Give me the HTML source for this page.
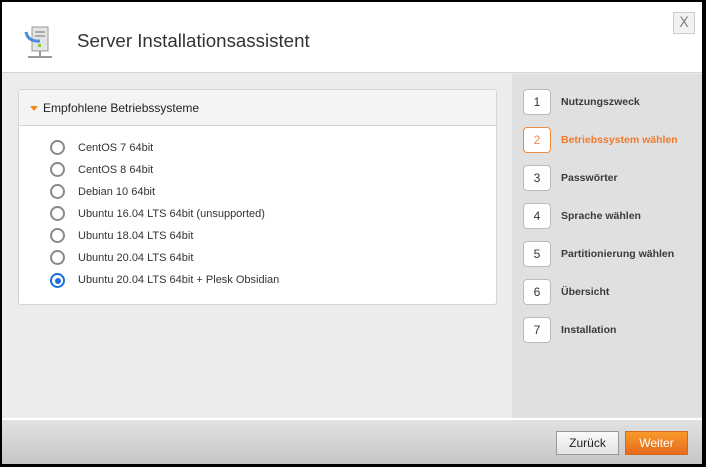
<!DOCTYPE html>
<html><head><style>
*{margin:0;padding:0;box-sizing:border-box}
body{width:706px;height:467px;background:#000;font-family:"Liberation Sans","DejaVu Sans",sans-serif;position:relative;overflow:hidden}
#w{position:absolute;left:2px;top:2px;width:700px;height:462px;background:#ececec}
#hd{position:absolute;left:0;top:0;width:700px;height:71px;background:#fff;border-bottom:1px solid #d4d4d4}
#hd h1{position:absolute;left:75px;top:28px;font-size:18.7px;font-weight:normal;color:#333}
#x{position:absolute;left:671px;top:10px;width:22px;height:22px;border:1px solid #ccc;background:#f2f2f2;color:#888;font-size:14px;text-align:center;line-height:20px;font-family:"DejaVu Sans",sans-serif}
#sb{position:absolute;left:510px;top:72px;width:190px;height:344px;background:#e0e0e0}
.st{position:absolute;left:11px;width:28px;height:26px;border:1px solid #bbb;border-radius:4px;background:#fff;font-size:12px;text-align:center;line-height:24px;color:#333}
.sl{position:absolute;left:49px;font-size:10.5px;font-weight:bold;color:#3a3a3a;line-height:26px}
#ft{position:absolute;left:0;top:416px;width:700px;height:46px;background:linear-gradient(#e2e2e2,#c6c6c6);border-top:2px solid #fff}
.b{position:absolute;top:11px;height:24px;font-size:12px;text-align:center;line-height:22px}
#pn{position:absolute;left:16px;top:87px;width:479px;height:216px;background:#fff;border:1px solid #d4d4d4;border-radius:3px}
#ph{height:36px;background:#f4f4f4;border-bottom:1px solid #d4d4d4;font-size:12px;line-height:36px;padding-left:24px;color:#222;position:relative}
#ph:before{content:"";position:absolute;left:11px;top:16px;border-left:4px solid transparent;border-right:4px solid transparent;border-top:5px solid #f08a1c}
.r{position:absolute;left:31px;width:15px;height:15px;border:2px solid #8a8a8a;border-radius:50%}
.r.on{border-color:#1a6fe0}
.r.on:after{content:"";position:absolute;left:2.5px;top:2.5px;width:6px;height:6px;border-radius:50%;background:#1a6fe0}
.rl{position:absolute;left:59px;font-size:11px;color:#333;line-height:16px}
</style></head><body>
<div id="w">
<div id="hd">
<svg style="position:absolute;left:22px;top:22px" width="32" height="40" viewBox="0 0 32 40">
<rect x="8" y="3" width="16" height="24" fill="#e4e4e4" stroke="#999"/>
<rect x="11" y="7" width="10" height="2" fill="#aaa"/><rect x="11" y="11" width="10" height="2" fill="#aaa"/>
<rect x="14" y="20" width="3" height="3" fill="#8c3"/>
<path d="M2 8 Q4 18 16 17" stroke="#4a8be0" stroke-width="3" fill="none"/>
<path d="M16 27 V33 M4 33 H28" stroke="#999" stroke-width="2"/>
</svg>
<h1>Server Installationsassistent</h1>
<div id="x">X</div>
</div>
<div id="pn">
<div id="ph">Empfohlene Betriebssysteme</div>
<div class="r" style="top:50px"></div><div class="rl" style="top:50px">CentOS 7 64bit</div>
<div class="r" style="top:72px"></div><div class="rl" style="top:72px">CentOS 8 64bit</div>
<div class="r" style="top:94px"></div><div class="rl" style="top:94px">Debian 10 64bit</div>
<div class="r" style="top:116px"></div><div class="rl" style="top:116px">Ubuntu 16.04 LTS 64bit (unsupported)</div>
<div class="r" style="top:138px"></div><div class="rl" style="top:138px">Ubuntu 18.04 LTS 64bit</div>
<div class="r" style="top:160px"></div><div class="rl" style="top:160px">Ubuntu 20.04 LTS 64bit</div>
<div class="r on" style="top:183px"></div><div class="rl" style="top:182px">Ubuntu 20.04 LTS 64bit + Plesk Obsidian</div>
</div>
<div id="sb">
<div class="st" style="top:15px">1</div><div class="sl" style="top:15px">Nutzungszweck</div>
<div class="st" style="top:53px;border-color:#f08a3c;color:#f08a3c">2</div><div class="sl" style="top:53px;color:#f07a2c">Betriebssystem wählen</div>
<div class="st" style="top:91px">3</div><div class="sl" style="top:91px">Passwörter</div>
<div class="st" style="top:129px">4</div><div class="sl" style="top:129px">Sprache wählen</div>
<div class="st" style="top:167px">5</div><div class="sl" style="top:167px">Partitionierung wählen</div>
<div class="st" style="top:205px">6</div><div class="sl" style="top:205px">Übersicht</div>
<div class="st" style="top:243px">7</div><div class="sl" style="top:243px">Installation</div>
</div>
<div id="ft">
<div class="b" style="left:554px;width:63px;border:1px solid #999;background:linear-gradient(#fafafa,#e4e4e4);color:#222">Zurück</div>
<div class="b" style="left:623px;width:63px;border:1px solid #d26a1a;background:linear-gradient(#f99a2a,#e86a1e);color:#fff">Weiter</div>
</div>
</div>
</body></html>
